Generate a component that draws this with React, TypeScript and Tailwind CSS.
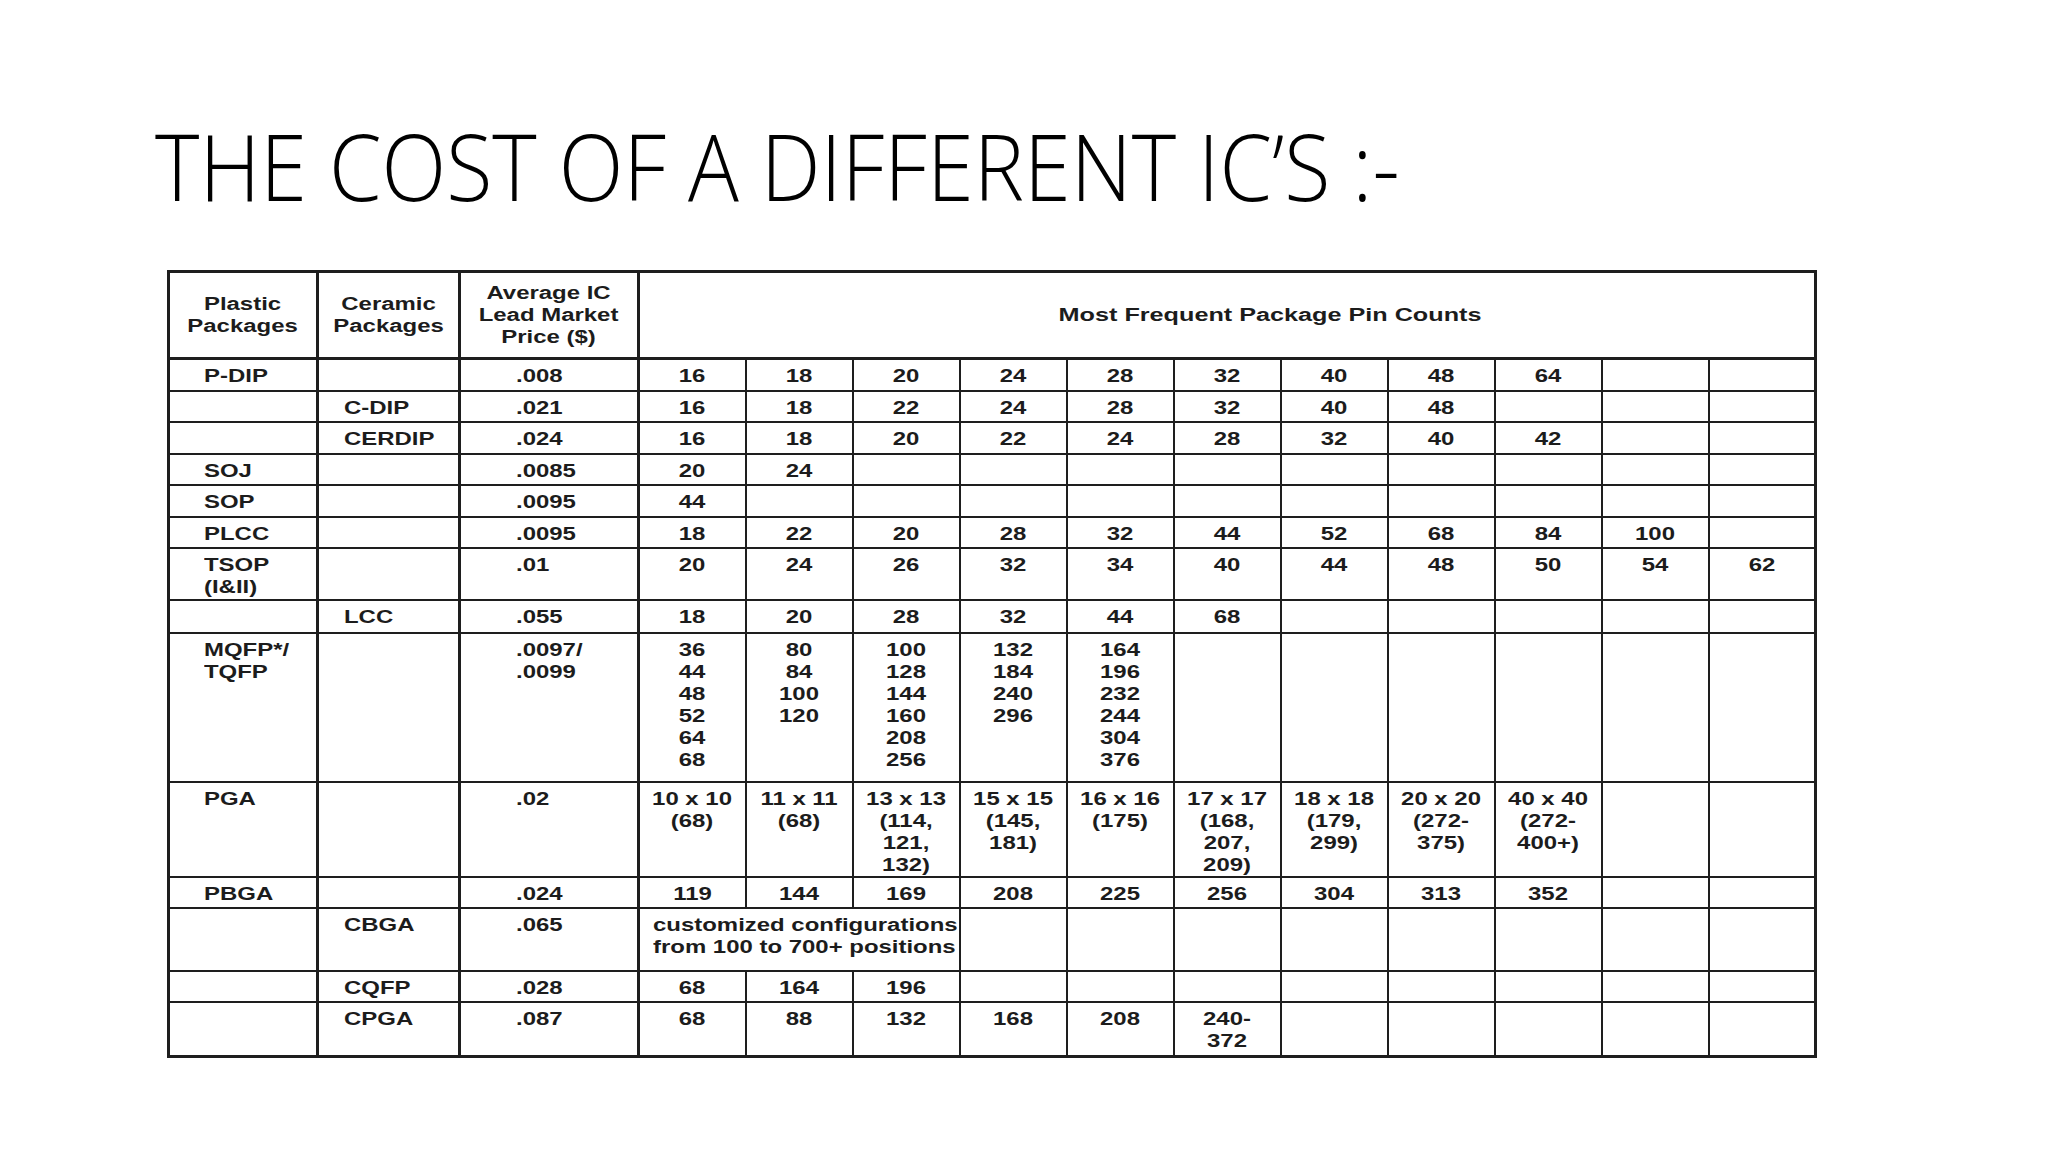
type Row = {
  plastic?: string;
  ceramic?: string;
  price: string;
  pins?: string[];
  span?: string;
  h: string;
};

const ROWS: Row[] = [
  { plastic: "P-DIP", price: ".008", pins: ["16", "18", "20", "24", "28", "32", "40", "48", "64"], h: "h-[32px]" },
  { ceramic: "C-DIP", price: ".021", pins: ["16", "18", "22", "24", "28", "32", "40", "48"], h: "h-[31px]" },
  { ceramic: "CERDIP", price: ".024", pins: ["16", "18", "20", "22", "24", "28", "32", "40", "42"], h: "h-[32px]" },
  { plastic: "SOJ", price: ".0085", pins: ["20", "24"], h: "h-[31px]" },
  { plastic: "SOP", price: ".0095", pins: ["44"], h: "h-[32px]" },
  { plastic: "PLCC", price: ".0095", pins: ["18", "22", "20", "28", "32", "44", "52", "68", "84", "100"], h: "h-[31px]" },
  { plastic: "TSOP\n(I&II)", price: ".01", pins: ["20", "24", "26", "32", "34", "40", "44", "48", "50", "54", "62"], h: "h-[52px]" },
  { ceramic: "LCC", price: ".055", pins: ["18", "20", "28", "32", "44", "68"], h: "h-[33px]" },
  {
    plastic: "MQFP*/\nTQFP",
    price: ".0097/\n.0099",
    pins: [
      "36\n44\n48\n52\n64\n68",
      "80\n84\n100\n120",
      "100\n128\n144\n160\n208\n256",
      "132\n184\n240\n296",
      "164\n196\n232\n244\n304\n376",
    ],
    h: "h-[149px]",
  },
  {
    plastic: "PGA",
    price: ".02",
    pins: [
      "10 x 10\n(68)",
      "11 x 11\n(68)",
      "13 x 13\n(114,\n121,\n132)",
      "15 x 15\n(145,\n181)",
      "16 x 16\n(175)",
      "17 x 17\n(168,\n207,\n209)",
      "18 x 18\n(179,\n299)",
      "20 x 20\n(272-\n375)",
      "40 x 40\n(272-\n400+)",
    ],
    h: "h-[94px]",
  },
  { plastic: "PBGA", price: ".024", pins: ["119", "144", "169", "208", "225", "256", "304", "313", "352"], h: "h-[31px]" },
  { ceramic: "CBGA", price: ".065", span: "customized configurations\nfrom 100 to 700+ positions", h: "h-[63px]" },
  { ceramic: "CQFP", price: ".028", pins: ["68", "164", "196"], h: "h-[31px]" },
  { ceramic: "CPGA", price: ".087", pins: ["68", "88", "132", "168", "208", "240-\n372"], h: "h-[55px]" },
];

const cell = "border-2 border-[#1e1e1e] align-top pt-[5px] whitespace-pre-line leading-[22px]";

// the scanned table is stretched sideways, so the glyphs are widened to match
function Wide({ children, left }: { children: React.ReactNode; left?: boolean }) {
  return (
    <span className={`inline-block scale-x-[1.33] whitespace-pre-line ${left ? "origin-left" : "origin-center"}`}>
      {children}
    </span>
  );
}

function pinCells(row: Row) {
  if (row.span) {
    return (
      <>
        <td colSpan={3} className={`${cell} pl-[13px] text-left`}>
          <Wide left>{row.span}</Wide>
        </td>
        {Array.from({ length: 8 }).map((_, i) => (
          <td key={i} className={cell} />
        ))}
      </>
    );
  }
  const pins = row.pins ?? [];
  return Array.from({ length: 11 }).map((_, i) => (
    <td key={i} className={`${cell} text-center`}>
      {pins[i] ? <Wide>{pins[i]}</Wide> : null}
    </td>
  ));
}

const headCell = "border-2 border-r-[3px] border-b-[3px] border-[#1e1e1e] align-middle text-center leading-[22px] font-bold";

export default function App() {
  return (
    <div className="w-[2048px] h-[1152px] bg-white overflow-hidden">
      {/* slide title */}
      <div className="pl-[155px] pt-[113px] h-[270px]">
        <h1 className="origin-left scale-x-[0.92] text-[92px] leading-[106px] font-light text-black whitespace-nowrap font-['Open_Sans',sans-serif]">
          THE COST OF A DIFFERENT IC’S :-
        </h1>
      </div>

      {/* table */}
      <div className="pl-[167px]">
        <table className="table-fixed border-collapse border-[3px] border-[#1e1e1e] text-[18px] font-bold text-[#1c1c1c] font-['Liberation_Sans',Arial,sans-serif]">
          <colgroup>
            <col className="w-[149px]" />
            <col className="w-[142px]" />
            <col className="w-[179px]" />
            {Array.from({ length: 11 }).map((_, i) => (
              <col key={i} className="w-[107px]" />
            ))}
          </colgroup>
          <thead>
            <tr className="h-[87px]">
              <th className={headCell}>
                <Wide>{"Plastic\nPackages"}</Wide>
              </th>
              <th className={headCell}>
                <Wide>{"Ceramic\nPackages"}</Wide>
              </th>
              <th className={headCell}>
                <Wide>{"Average IC\nLead Market\nPrice ($)"}</Wide>
              </th>
              <th colSpan={11} className="border-2 border-b-[3px] border-[#1e1e1e] pl-[86px] align-middle text-center font-bold">
                <span className="inline-block scale-x-[1.4] whitespace-nowrap">Most Frequent Package Pin Counts</span>
              </th>
            </tr>
          </thead>
          <tbody>
            {ROWS.map((row, r) => (
              <tr key={r} className={row.h}>
                <td className={`${cell} border-r-[3px] pl-[34px] text-left`}>
                  {row.plastic ? <Wide left>{row.plastic}</Wide> : null}
                </td>
                <td className={`${cell} border-r-[3px] pl-[25px] text-left`}>
                  {row.ceramic ? <Wide left>{row.ceramic}</Wide> : null}
                </td>
                <td className={`${cell} border-r-[3px] pl-[55px] text-left`}>
                  <Wide left>{row.price}</Wide>
                </td>
                {pinCells(row)}
              </tr>
            ))}
          </tbody>
        </table>
      </div>
    </div>
  );
}
